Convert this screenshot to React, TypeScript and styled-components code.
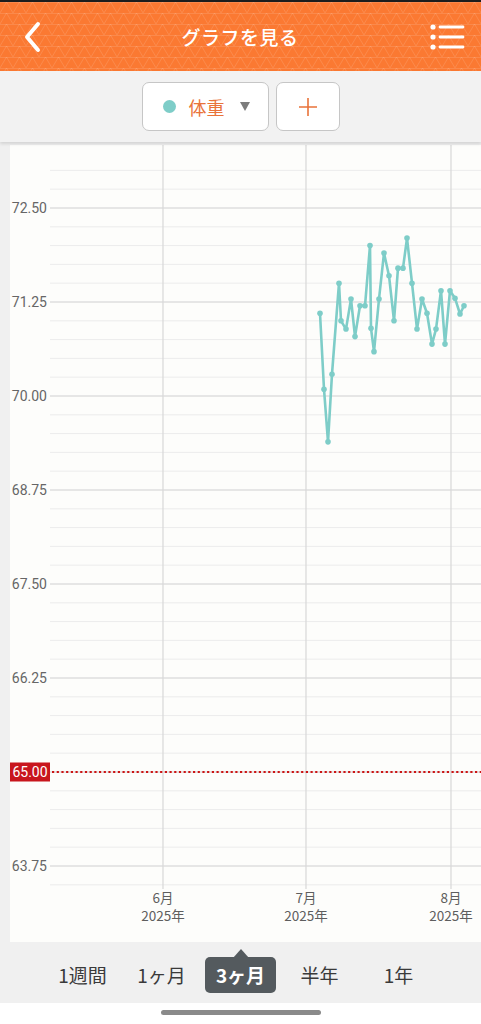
import styled, { createGlobalStyle } from "styled-components";

const GlobalStyle = createGlobalStyle`
  html, body {
    margin: 0;
    padding: 0;
    background: #ffffff;
  }
  body {
    font-family: "Roboto", "Noto Sans CJK JP", sans-serif;
  }
`;

const trianglePattern = encodeURIComponent(
  `<svg xmlns="http://www.w3.org/2000/svg" width="13" height="11"><path d="M0 11 L6.5 0 L13 11 M0 0.5 H13" fill="none" stroke="#ffffff" stroke-opacity="0.12" stroke-width="1"/></svg>`
);

// chart geometry, in page pixels (svg viewBox is offset to match)
const CHART_LEFT = 50;
const CHART_RIGHT = 481;
const yOf = (v: number) => 396 - (v - 70) * 75.2;

const majorTicks = [72.5, 71.25, 70, 68.75, 67.5, 66.25, 65, 63.75];
const minorTicks = Array.from({ length: 39 }, (_, i) => 73 - i * 0.25);

const months = [
  { x: 163, label: "6月" },
  { x: 306, label: "7月" },
  { x: 451, label: "8月" },
];

const weights: [number, number][] = [
  [320, 71.1], [324, 70.09], [328, 69.39], [332, 70.29], [339, 71.5],
  [341, 71.0], [346, 70.89], [351, 71.29], [355, 70.79], [360, 71.2],
  [365, 71.2], [370, 72.0], [371, 70.9], [374, 70.59], [379, 71.29],
  [384, 71.9], [389, 71.6], [394, 71.0], [398, 71.7], [403, 71.7],
  [407, 72.1], [412, 71.5], [417, 70.89], [422, 71.29], [427, 71.1],
  [432, 70.69], [436, 70.89], [441, 71.4], [445, 70.69], [450, 71.4],
  [455, 71.3], [460, 71.09], [464, 71.2],
];

const tabs = ["1週間", "1ヶ月", "3ヶ月", "半年", "1年"];

function App() {
  const linePoints = weights.map(([x, v]) => `${x},${yOf(v).toFixed(1)}`).join(" ");
  return (
    <Page>
      <GlobalStyle />
      <Header>
        <IconButton aria-label="back">
          <svg width="22" height="32" viewBox="0 0 22 32">
            <path d="M16 3 L5 16 L16 29" fill="none" stroke="#fff" strokeWidth="4" strokeLinecap="round" strokeLinejoin="round" />
          </svg>
        </IconButton>
        <Title>グラフを見る</Title>
        <IconButton aria-label="menu">
          <svg width="36" height="30" viewBox="0 0 36 30">
            <circle cx="4" cy="5" r="2.6" fill="#fff" />
            <circle cx="4" cy="15" r="2.6" fill="#fff" />
            <circle cx="4" cy="25" r="2.6" fill="#fff" />
            <path d="M11 5 H34 M11 15 H34 M11 25 H34" stroke="#fff" strokeWidth="2.8" strokeLinecap="round" />
          </svg>
        </IconButton>
      </Header>
      <SubBar>
        <Dropdown>
          <Dot />
          <DropLabel>体重</DropLabel>
          <Caret />
        </Dropdown>
        <AddButton aria-label="add">
          <svg width="20" height="20" viewBox="0 0 20 20">
            <path d="M10 1 V19 M1 10 H19" stroke="#e9733a" strokeWidth="1.6" />
          </svg>
        </AddButton>
      </SubBar>
      <ChartArea>
        <Panel>
          <svg width="471" height="797" viewBox="10 145 471 797">
            {minorTicks.map((v) => (
              <line key={`m${v}`} x1={CHART_LEFT} x2={CHART_RIGHT} y1={yOf(v)} y2={yOf(v)} stroke="#ececec" strokeWidth="1" />
            ))}
            {majorTicks.map((v) => (
              <line key={`M${v}`} x1={CHART_LEFT} x2={CHART_RIGHT} y1={yOf(v)} y2={yOf(v)} stroke="#d8d8d8" strokeWidth="1.2" />
            ))}
            {months.map((m) => (
              <line key={m.label} x1={m.x} x2={m.x} y1={145} y2={889} stroke="#d8d8d8" strokeWidth="1.2" />
            ))}
            {majorTicks
              .filter((v) => v !== 65)
              .map((v) => (
                <AxisText key={`t${v}`} x={47} y={yOf(v) + 5} textAnchor="end">
                  {v.toFixed(2)}
                </AxisText>
              ))}
            {months.map((m) => (
              <g key={`l${m.label}`}>
                <MonthText x={m.x} y={903} textAnchor="middle">{m.label}</MonthText>
                <MonthText x={m.x} y={921} textAnchor="middle">2025年</MonthText>
              </g>
            ))}
            <line x1={52} x2={481} y1={yOf(65)} y2={yOf(65)} stroke="#cc1515" strokeWidth="2.2" strokeDasharray="2.2 2.5" />
            <rect x={10} y={yOf(65) - 9.5} width={40} height={19} fill="#c8161d" />
            <GoalText x={30} y={yOf(65) + 5} textAnchor="middle">65.00</GoalText>
            <polyline points={linePoints} fill="none" stroke="#7ecdc8" strokeWidth="2.6" strokeLinejoin="round" />
            {weights.map(([x, v]) => (
              <circle key={x} cx={x} cy={yOf(v)} r={2.8} fill="#7ecdc8" />
            ))}
          </svg>
        </Panel>
      </ChartArea>
      <TabBar>
        {tabs.map((t) => (
          <Tab key={t} $active={t === "3ヶ月"}>{t}</Tab>
        ))}
      </TabBar>
      <HomeArea>
        <HomeIndicator />
      </HomeArea>
    </Page>
  );
}

export default App;

const Page = styled.div`
  width: 481px;
  height: 1024px;
  display: flex;
  flex-direction: column;
  overflow: hidden;
  background: #f0f0f0;
`;

const Header = styled.header`
  height: 69px;
  border-top: 2px solid #1d1d1d;
  background-color: #fb7932;
  background-image: url("data:image/svg+xml,${trianglePattern}");
  display: flex;
  align-items: center;
  justify-content: space-between;
  padding: 0 16px 0 15px;
  flex-shrink: 0;
`;

const IconButton = styled.button`
  background: none;
  border: none;
  padding: 0;
  display: flex;
  align-items: center;
  justify-content: center;
  width: 36px;
  height: 36px;
`;

const Title = styled.h1`
  margin: 0;
  color: #ffffff;
  font-family: "Noto Sans CJK JP", sans-serif;
  font-size: 19px;
  font-weight: 500;
  letter-spacing: 0.5px;
`;

const SubBar = styled.div`
  height: 71px;
  background: #f2f2f2;
  display: flex;
  align-items: center;
  justify-content: center;
  gap: 7px;
  position: relative;
  z-index: 2;
  box-shadow: 0 2px 3px rgba(0, 0, 0, 0.12);
  flex-shrink: 0;
`;

const Dropdown = styled.button`
  width: 127px;
  height: 49px;
  background: #ffffff;
  border: 1.5px solid #c6c6c6;
  border-radius: 7px;
  display: flex;
  align-items: center;
  padding: 0 0 0 20px;
  box-sizing: border-box;
`;

const Dot = styled.span`
  width: 13px;
  height: 13px;
  border-radius: 50%;
  background: #7ecdc8;
`;

const DropLabel = styled.span`
  margin-left: 13px;
  color: #e9733a;
  font-family: "Noto Sans CJK JP", sans-serif;
  font-size: 18px;
`;

const Caret = styled.span`
  margin-left: 15px;
  width: 0;
  height: 0;
  border-left: 5px solid transparent;
  border-right: 5px solid transparent;
  border-top: 9px solid #7c7c7c;
`;

const AddButton = styled.button`
  width: 64px;
  height: 49px;
  background: #ffffff;
  border: 1.5px solid #c6c6c6;
  border-radius: 7px;
  display: flex;
  align-items: center;
  justify-content: center;
  padding: 0;
`;

const ChartArea = styled.div`
  flex: 1;
  padding: 3px 0 0 10px;
  background: #f0f0f0;
  display: flex;
`;

const Panel = styled.div`
  width: 471px;
  height: 797px;
  background: #fdfdfb;
  svg {
    display: block;
  }
`;

const AxisText = styled.text`
  font-family: "Roboto", "Noto Sans CJK JP", sans-serif;
  font-size: 14px;
  fill: #666666;
`;

const MonthText = styled.text`
  font-family: "Noto Sans CJK JP", sans-serif;
  font-size: 13.5px;
  fill: #5e5e5e;
`;

const GoalText = styled.text`
  font-family: "Roboto", sans-serif;
  font-size: 14px;
  fill: #ffffff;
`;

const TabBar = styled.nav`
  height: 61px;
  background: #f0f0f0;
  display: grid;
  grid-template-columns: repeat(5, 79px);
  justify-content: center;
  align-items: center;
  flex-shrink: 0;
`;

const Tab = styled.div<{ $active?: boolean }>`
  justify-self: center;
  position: relative;
  padding: 0 11px;
  height: 36px;
  line-height: 36px;
  border-radius: 5px;
  font-family: "Noto Sans CJK JP", sans-serif;
  font-size: 19px;
  font-weight: ${(p) => (p.$active ? 700 : 400)};
  color: ${(p) => (p.$active ? "#ffffff" : "#3a3a3a")};
  background: ${(p) => (p.$active ? "#545a5e" : "transparent")};
  margin-top: 4px;

  &::before {
    content: "";
    display: ${(p) => (p.$active ? "block" : "none")};
    position: absolute;
    left: 50%;
    top: -8px;
    transform: translateX(-50%);
    border-left: 8px solid transparent;
    border-right: 8px solid transparent;
    border-bottom: 9px solid #545a5e;
  }
`;

const HomeArea = styled.div`
  height: 21px;
  background: #ffffff;
  display: flex;
  justify-content: center;
  padding-top: 7px;
  box-sizing: border-box;
  flex-shrink: 0;
`;

const HomeIndicator = styled.div`
  width: 160px;
  height: 5px;
  border-radius: 3px;
  background: #8a8a8a;
`;
